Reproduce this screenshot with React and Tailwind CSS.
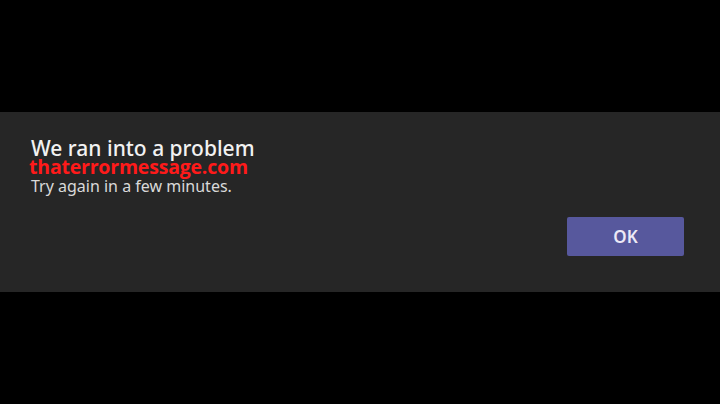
import React from 'react';

const App = () => {
  return (
    <div className="w-[720px] h-[404px] bg-black flex flex-col justify-center" style={{ fontFamily: '"Noto Sans", "Open Sans", sans-serif' }}>
      <div className="h-[180px] bg-[#262626] flex flex-col px-[31px]">
        <div className="pt-[24px] flex flex-col">
          <h1 className="text-[21px] leading-[24px] text-[#f2f2f2] font-medium">We ran into a problem</h1>
          <p className="-mt-[3px] text-[19.5px] leading-[19px] font-bold text-[#ff1a1a] -ml-[2px] tracking-[-0.2px]" style={{ fontFamily: '"Open Sans", sans-serif' }}>thaterrormessage.com</p>
          <p className="text-[16px] leading-[20px] text-[#d9d9d9]">Try again in a few minutes.</p>
        </div>
        <div className="flex justify-end mt-[21px] mr-[5px]">
          <button className="w-[117px] h-[39px] bg-[#57589d] rounded-[2px] text-[17px] text-[#ece9f6] font-semibold">OK</button>
        </div>
      </div>
    </div>
  );
};

export default App;
